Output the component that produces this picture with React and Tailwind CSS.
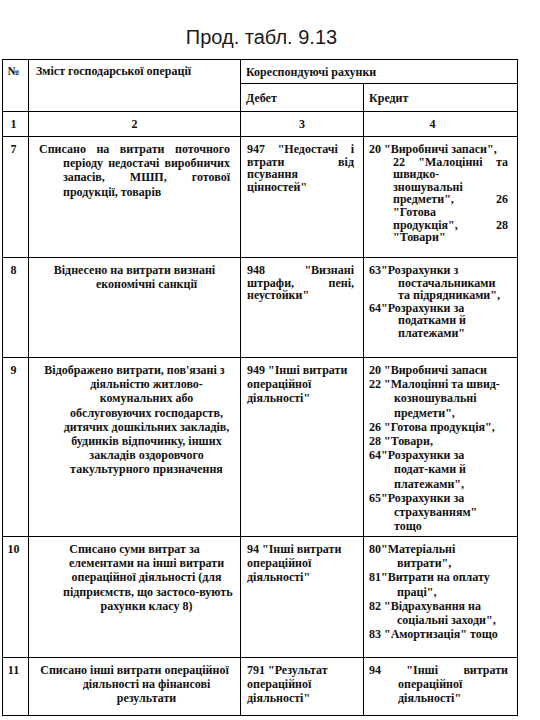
import React from "react";

// one line of a cell: [align, indent, text]  align: l = left, c = centre, j = justified
const rows = [
  {
    n: "7",
    op: [
      ["j", 0, "Списано на витрати поточного"],
      ["j", 24, "періоду недостачі виробничих"],
      ["j", 24, "запасів, МШП, готової"],
      ["l", 24, "продукції, товарів"],
    ],
    debit: [
      ["j", 0, "947 \"Недостачі і"],
      ["j", 0, "втрати від"],
      ["l", 0, "псування"],
      ["l", 0, "цінностей\""],
    ],
    credit: [
      ["l", 0, "20 \"Виробничі запаси\","],
      ["j", 24, "22 \"Малоцінні та"],
      ["l", 24, "швидко-"],
      ["l", 24, "зношувальні"],
      ["j", 24, "предмети\", 26"],
      ["l", 24, "\"Готова"],
      ["j", 24, "продукція\", 28"],
      ["l", 24, "\"Товари\""],
    ],
    tight: true,
  },
  {
    n: "8",
    op: [
      ["c", 0, "Віднесено на витрати визнані"],
      ["c", 24, "економічні санкції"],
    ],
    debit: [
      ["j", 0, "948 \"Визнані"],
      ["j", 0, "штрафи, пені,"],
      ["l", 0, "неустойки\""],
    ],
    credit: [
      ["l", 0, "63\"Розрахунки з"],
      ["l", 29, "постачальниками"],
      ["l", 29, "та підрядниками\","],
      ["l", 0, "64\"Розрахунки за"],
      ["l", 29, "податками й"],
      ["l", 29, "платежами\""],
    ],
    tight: true,
  },
  {
    n: "9",
    op: [
      ["c", 0, "Відображено витрати, пов'язані з"],
      ["c", 24, "діяльністю житлово-"],
      ["c", 24, "комунальних або"],
      ["c", 24, "обслуговуючих господарств,"],
      ["c", 24, "дитячих дошкільних закладів,"],
      ["c", 24, "будинків відпочинку, інших"],
      ["c", 24, "закладів оздоровчого"],
      ["c", 24, "такультурного призначення"],
    ],
    debit: [
      ["l", 0, "949 \"Інші витрати"],
      ["l", 0, "операційної"],
      ["l", 0, "діяльності\""],
    ],
    credit: [
      ["l", 0, "20 \"Виробничі запаси"],
      ["l", 0, "22 \"Малоцінні та швид-"],
      ["l", 25, "козношувальні"],
      ["l", 25, "предмети\","],
      ["l", 0, "26 \"Готова продукція\","],
      ["l", 0, "28 \"Товари,"],
      ["l", 0, "64\"Розрахунки за"],
      ["l", 25, "подат-ками й"],
      ["l", 25, "платежами\","],
      ["l", 0, "65\"Розрахунки за"],
      ["l", 25, "страхуванням\""],
      ["l", 25, "тощо"],
    ],
  },
  {
    n: "10",
    op: [
      ["c", 0, "Списано суми витрат за"],
      ["c", 24, "елементами на інші витрати"],
      ["c", 24, "операційної діяльності (для"],
      ["c", 24, "підприємств, що застосо-вують"],
      ["c", 24, "рахунки класу 8)"],
    ],
    debit: [
      ["l", 0, "94 \"Інші витрати"],
      ["l", 0, "операційної"],
      ["l", 0, "діяльності\""],
    ],
    credit: [
      ["l", 0, "80\"Матеріальні"],
      ["l", 28, "витрати\","],
      ["l", 0, "81\"Витрати на оплату"],
      ["l", 28, "праці\","],
      ["l", 0, "82 \"Відрахування на"],
      ["l", 28, "соціальні заходи\","],
      ["l", 0, "83 \"Амортизація\" тощо"],
    ],
  },
  {
    n: "11",
    op: [
      ["c", 0, "Списано інші витрати операційної"],
      ["c", 24, "діяльності на фінансові"],
      ["c", 24, "результати"],
    ],
    debit: [
      ["l", 0, "791 \"Результат"],
      ["l", 0, "операційної"],
      ["l", 0, "діяльності\""],
    ],
    credit: [
      ["j", 0, "94 \"Інші витрати"],
      ["l", 29, "операційної"],
      ["l", 29, "діяльності\""],
    ],
  },
];

const Line = ({ line, tight }) => {
  const [align, indent, text] = line;
  const lh = tight ? "leading-[12.6px]" : "leading-[14.2px]";
  if (align === "j") {
    return (
      <div className={`flex justify-between whitespace-nowrap ${lh}`} style={{ marginLeft: indent }}>
        {text.split(" ").map((w, i) => (
          <span key={i}>{w}</span>
        ))}
      </div>
    );
  }
  return (
    <div
      className={`whitespace-nowrap ${lh} ${align === "c" ? "text-center" : "text-left"}`}
      style={{ marginLeft: indent }}
    >
      {text}
    </div>
  );
};

const Cell = ({ lines, tight, className }) => (
  <div className={`border-r border-b border-black ${tight ? "pt-[6px]" : "pt-[5px]"} ${className}`}>
    {lines.map((l, i) => (
      <Line key={i} line={l} tight={tight} />
    ))}
  </div>
);

export default function App() {
  return (
    <div className="w-[540px] h-[720px] bg-white overflow-hidden text-[#111]">
      <div className="ml-[2px] w-[516px] pt-[25px]">
        <h1
          className="text-center text-[20px] leading-[24px] h-[24px] mb-[10px] pl-[3px] text-[#1a1a1a]"
          style={{ fontFamily: '"Liberation Sans", Arial, sans-serif' }}
        >
          Прод. табл. 9.13
        </h1>

        <div
          className="grid grid-cols-[26px_212px_123px_154px] grid-rows-[24px_28px_25px_121px_100px_179px_121px_58px] border-l border-t border-black text-[12px] font-bold"
          style={{ fontFamily: '"Liberation Serif", "Times New Roman", serif' }}
        >
          {/* header */}
          <div className="row-span-2 border-r border-b border-black text-center pr-[4px] pt-[4px] leading-[14px]">№</div>
          <div className="row-span-2 border-r border-b border-black pl-[7px] pt-[4px] leading-[14px]">
            Зміст господарської операції
          </div>
          <div className="col-span-2 border-r border-b border-black pl-[5px] flex items-center">
            Кореспондуючі рахунки
          </div>
          <div className="border-r border-b border-black pl-[5px] flex items-center">Дебет</div>
          <div className="border-r border-b border-black pl-[5px] flex items-center">Кредит</div>

          {/* column numbers */}
          <div className="border-r border-b border-black text-center pr-[4px] flex items-center justify-center">1</div>
          <div className="border-r border-b border-black flex items-center justify-center">2</div>
          <div className="border-r border-b border-black flex items-center justify-center">3</div>
          <div className="border-r border-b border-black flex items-center justify-center pr-[16px]">4</div>

          {rows.map((r) => (
            <React.Fragment key={r.n}>
              <div className="border-r border-b border-black text-center pr-[4px] pt-[5px] leading-[14px]">{r.n}</div>
              <Cell lines={r.op} className="pl-[10px] pr-[10px]" />
              <Cell lines={r.debit} tight={r.tight} className="pl-[6px] pr-[9px]" />
              <Cell lines={r.credit} tight={r.tight} className="pl-[5px] pr-[9px]" />
            </React.Fragment>
          ))}
        </div>
      </div>
    </div>
  );
}
